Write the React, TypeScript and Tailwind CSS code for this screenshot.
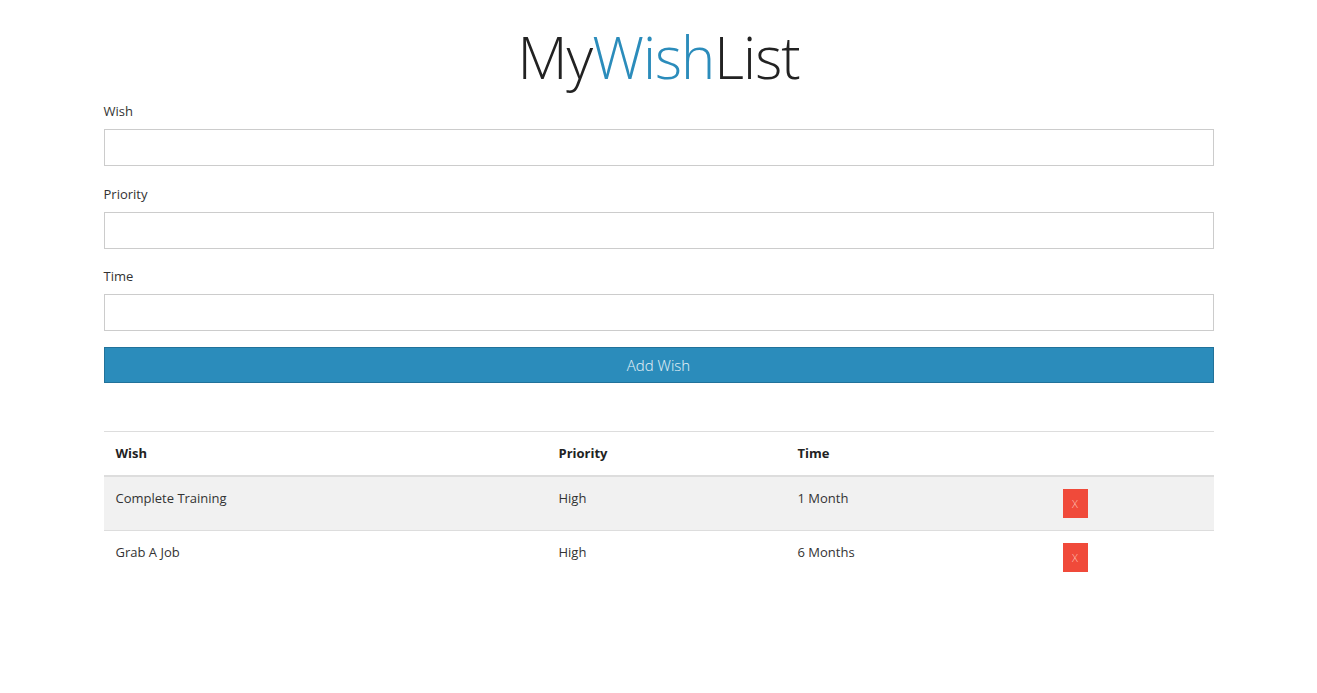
import React from "react";

const rows = [
  { wish: "Complete Training", priority: "High", time: "1 Month" },
  { wish: "Grab A Job", priority: "High", time: "6 Months" },
];

function Field({ label, className = "" }: { label: string; className?: string }) {
  return (
    <div className={`flex flex-col ${className}`}>
      <label className="text-[13px] leading-[18px] text-[#333] mb-[9px]">{label}</label>
      <input className="h-[37px] w-full border border-[#cccccc] bg-white outline-none" />
    </div>
  );
}

export default function App() {
  return (
    <div
      className="min-h-[693px] bg-white text-[#333]"
      style={{ fontFamily: '"Open Sans", "Liberation Sans", sans-serif' }}
    >
      <div className="w-[1110px] mx-auto pt-[21px]">
        <h1 className="text-center text-[58px] leading-[72px] font-light text-[#222] tracking-[-1px]">
          My<span className="text-[#2b8cbb]">Wish</span>List
        </h1>
        <div className="mt-[9px] flex flex-col">
          <Field label="Wish" />
          <Field label="Priority" className="mt-[19px]" />
          <Field label="Time" className="mt-[18px]" />
        </div>
        <button className="mt-[16px] w-full h-[36px] bg-[#2b8cbb] border border-[#22729a] text-white/90 text-[15px] font-light">
          Add Wish
        </button>
        <table className="mt-[48px] w-full border-collapse table-fixed text-[13px] leading-[18px]">
          <colgroup>
            <col className="w-[443px]" />
            <col className="w-[239px]" />
            <col className="w-[265px]" />
            <col />
          </colgroup>
          <thead>
            <tr className="border-t border-[#dddddd] border-b-2 border-b-[#dddddd]">
              <th className="text-left font-bold text-[#222] px-[12px] pt-[12px] pb-[13px]">Wish</th>
              <th className="text-left font-bold text-[#222] px-[12px] pt-[12px] pb-[13px]">Priority</th>
              <th className="text-left font-bold text-[#222] px-[12px] pt-[12px] pb-[13px]">Time</th>
              <th className="px-[12px] pt-[12px] pb-[13px]"></th>
            </tr>
          </thead>
          <tbody>
            {rows.map((r, i) => (
              <tr
                key={i}
                className={`${i < rows.length - 1 ? "border-b border-[#dddddd]" : ""} ${i % 2 === 0 ? "bg-[#f1f1f1]" : "bg-white"}`}
              >
                <td className="align-top px-[12px] pt-[12px] pb-[12px]">{r.wish}</td>
                <td className="align-top px-[12px] pt-[12px] pb-[12px]">{r.priority}</td>
                <td className="align-top px-[12px] pt-[12px] pb-[12px]">{r.time}</td>
                <td className="align-top px-[12px] pt-[12px] pb-[12px]">
                  <button className="w-[25px] h-[29px] bg-[#f04a3a] text-[#ffc2b8] text-[11px] font-light leading-none flex items-center justify-center">
                    X
                  </button>
                </td>
              </tr>
            ))}
          </tbody>
        </table>
      </div>
    </div>
  );
}
